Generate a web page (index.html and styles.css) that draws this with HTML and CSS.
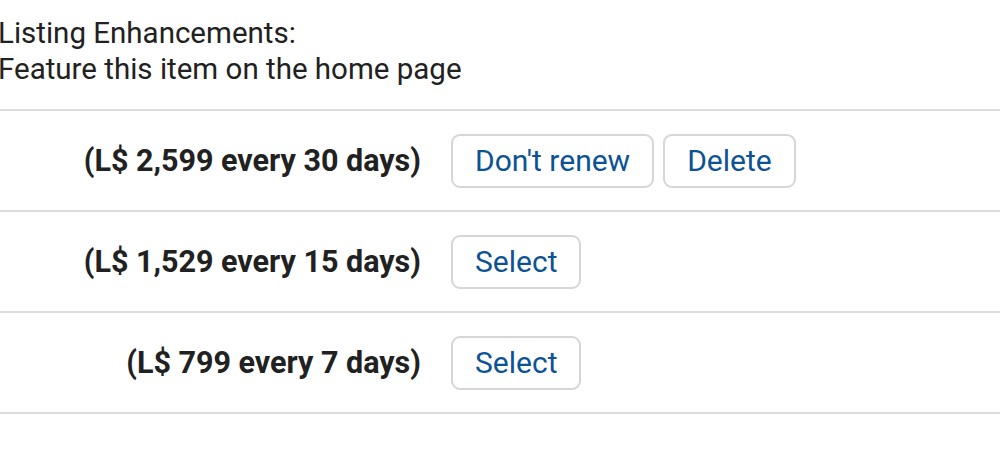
FILE: index.html
```html
<!DOCTYPE html>
<html lang="en">
<head>
<meta charset="utf-8">
<title>Listing Enhancements</title>
<link rel="stylesheet" href="styles.css">
</head>
<body>
<div class="page">
  <div class="intro">
    <div class="line">Listing Enhancements:</div>
    <div class="line">Feature this item on the home page</div>
  </div>
  <div class="options">
    <div class="row">
      <div class="price">(L$ 2,599 every 30 days)</div>
      <div class="actions">
        <button class="btn">Don't renew</button>
        <button class="btn">Delete</button>
      </div>
    </div>
    <div class="row">
      <div class="price">(L$ 1,529 every 15 days)</div>
      <div class="actions">
        <button class="btn">Select</button>
      </div>
    </div>
    <div class="row">
      <div class="price">(L$ 799 every 7 days)</div>
      <div class="actions">
        <button class="btn">Select</button>
      </div>
    </div>
  </div>
</div>
</body>
</html>
```
FILE: styles.css
```css
html, body {
  margin: 0;
  padding: 0;
  background: #ffffff;
}

body {
  font-family: Roboto, "Liberation Sans", Arial, sans-serif;
  color: #212121;
  font-size: 29.5px;
}

.page {
  padding-top: 15px;
}

.intro {
  margin-left: -2px;
  line-height: 36px;
  margin-bottom: 22px;
}

.options {
  border-top: 2px solid #dcdcdc;
}

.row {
  display: flex;
  align-items: center;
  height: 99px;
  border-bottom: 2px solid #dcdcdc;
}

.price {
  width: 421px;
  text-align: right;
  font-weight: 700;
  font-size: 30.5px;
  flex-shrink: 0;
}

.actions {
  display: flex;
  gap: 9px;
  margin-left: 30px;
}

.btn {
  font-family: inherit;
  font-size: 30px;
  color: #0b5394;
  background: #ffffff;
  border: 2px solid #d6d6d6;
  border-radius: 9px;
  height: 54px;
  padding: 0 22px;
  line-height: 1;
  cursor: pointer;
}
```
